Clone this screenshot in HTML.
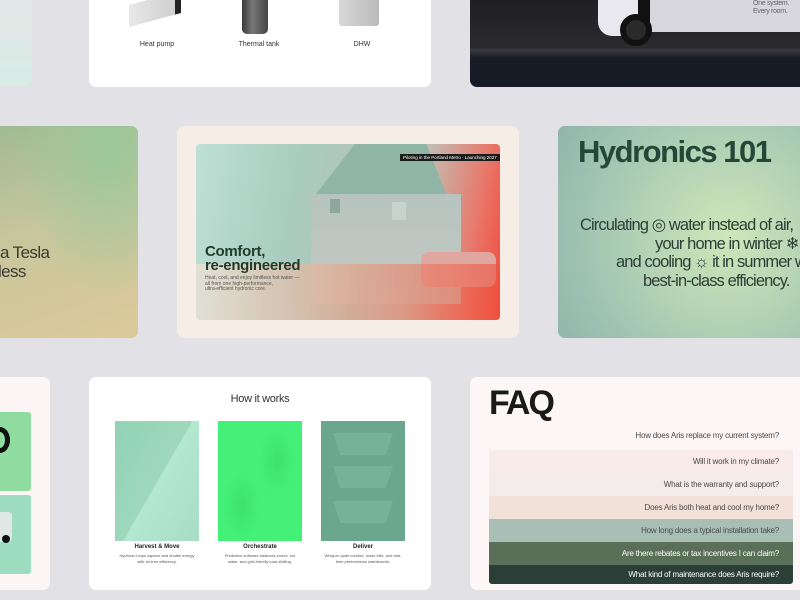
<!DOCTYPE html>
<html><head><meta charset="utf-8"><style>
*{margin:0;padding:0;box-sizing:border-box}
body{width:800px;height:600px;overflow:hidden;background:#e2e1e5;font-family:"Liberation Sans",sans-serif;position:relative}
.a{position:absolute}
.card{position:absolute;border-radius:7px;overflow:hidden}
.faq div{height:23px;text-align:right;padding-right:14px;font-size:8px;line-height:23px;color:#4a4a4a;letter-spacing:-0.2px}
.hl{position:absolute;font-size:16.5px;color:#2c3e36;letter-spacing:-0.9px;white-space:nowrap}
</style></head><body>

<!-- row 1 -->
<div class="card" style="left:-10px;top:-10px;width:42px;height:96px;background:linear-gradient(180deg,#e6e8e8,#dbe9e5 70%,#d7ece6)"></div>
<div class="card" style="left:89px;top:-10px;width:342px;height:97px;background:#fff">
  <div class="a" style="left:40px;top:8px;width:52px;height:22px;background:linear-gradient(90deg,#e8e8e8,#cfcfcf);transform:skewY(-15deg);border-right:6px solid #222"></div>
  <div class="a" style="left:153px;top:6px;width:26px;height:38px;border-radius:0 0 5px 5px;background:linear-gradient(90deg,#3a3a3a,#777 40%,#444)"></div>
  <div class="a" style="left:250px;top:6px;width:40px;height:30px;background:linear-gradient(90deg,#d8d8d8,#bbb);border-radius:0 0 3px 3px"></div>
  <div class="a" style="left:38px;top:51px;width:60px;text-align:center;font-size:7px;color:#333">Heat pump</div>
  <div class="a" style="left:140px;top:51px;width:60px;text-align:center;font-size:7px;color:#333">Thermal tank</div>
  <div class="a" style="left:243px;top:51px;width:60px;text-align:center;font-size:7px;color:#333">DHW</div>
</div>
<div class="card" style="left:470px;top:-10px;width:340px;height:97px;background:linear-gradient(180deg,#1e1e22 0%,#2a2a2e 60%,#3a3a40 61%,#1a1d26 70%,#141a26)">
  <div class="a" style="left:128px;top:0;width:40px;height:46px;background:#e8e8ee;border-radius:0 0 0 14px"></div>
  <div class="a" style="left:168px;top:0;width:12px;height:44px;background:#111"></div>
  <div class="a" style="left:180px;top:0;width:160px;height:42px;background:#d6d6dc"></div>
  <div class="a" style="left:150px;top:24px;width:32px;height:32px;border-radius:50%;background:#2a2a2a;border:6px solid #111"></div>
</div>
<div class="a" style="left:753px;top:0;font-size:7px;color:#666;line-height:8px;letter-spacing:-0.3px">One system.<br>Every room.</div>

<!-- row 2 -->
<div class="card" style="left:-10px;top:126px;width:148px;height:212px;background:radial-gradient(ellipse at 80% 10%,#9cc89a 0%,transparent 55%),linear-gradient(160deg,#9fba92 0%,#c8c69c 45%,#dcc99a 100%)">
  <div class="a" style="left:10px;top:117px;font-size:17px;color:#3a3a30;letter-spacing:-0.6px;white-space:nowrap">a Tesla</div>
  <div class="a" style="left:8px;top:136px;font-size:17px;color:#3a3a30;letter-spacing:-0.6px;white-space:nowrap;">less</div>
</div>

<div class="card" style="left:177px;top:126px;width:342px;height:212px;background:#f5ede6">
  <div class="a" style="left:19px;top:18px;width:304px;height:176px;border-radius:4px;overflow:hidden;background:linear-gradient(100deg,#bfe0d6 0%,#a9cdbf 30%,#b3c3bc 55%,#c4bdb2 70%,#e8776a 88%,#f04a3c 100%)">
    <div class="a" style="left:120px;top:0;width:130px;height:50px;background:#8fb5a6;clip-path:polygon(30% 0,85% 0,100% 100%,0 100%)"></div>
    <div class="a" style="left:115px;top:50px;width:150px;height:110px;background:linear-gradient(180deg,#b6c4bf,#c7c8c2);"></div>
    <div class="a" style="left:134px;top:55px;width:10px;height:14px;background:#8ea79d"></div>
    <div class="a" style="left:196px;top:58px;width:14px;height:18px;background:#c9d3ce"></div>
    <div class="a" style="left:225px;top:108px;width:75px;height:35px;border-radius:8px;background:#e0a6a0"></div>
    <div class="a" style="left:0;top:120px;width:304px;height:56px;background:linear-gradient(90deg,rgba(235,225,215,.8),rgba(230,160,130,.6) 50%,rgba(240,80,60,.6))"></div>
    <div class="a" style="left:204px;top:10px;background:#1b1b1b;color:#fff;font-size:4.5px;padding:1px 3px;white-space:nowrap">Piloting in the Portland Metro · Launching 2027</div>
    <div class="a" style="left:9px;top:101px;font-size:15px;font-weight:bold;color:#1f3b2c;line-height:14px;letter-spacing:-0.3px">Comfort,<br>re-engineered</div>
    <div class="a" style="left:9px;top:132px;font-size:5px;color:#555;line-height:5.5px">Heat, cool, and enjoy limitless hot water —<br>all from one high-performance,<br>ultra-efficient hydronic core.</div>
  </div>
</div>

<div class="card" style="left:558px;top:126px;width:252px;height:212px;background:radial-gradient(circle at 170px 110px,#cfe6b8 0%,#b5d4b5 40%,#9bbfb0 80%,#90b5aa 100%)">
  <div class="a" style="left:20px;top:8px;font-size:31px;font-weight:bold;color:#254738;letter-spacing:-1.5px">Hydronics 101</div>
  <div class="hl" style="left:22px;top:89px">Circulating ◎ water instead of air,</div>
  <div class="hl" style="left:97px;top:108px">your home in winter ❄ warming</div>
  <div class="hl" style="left:58px;top:127px">and cooling ☼ it in summer with</div>
  <div class="hl" style="left:85px;top:146px">best-in-class efficiency.</div>
</div>

<!-- row 3 -->
<div class="card" style="left:-10px;top:377px;width:60px;height:213px;background:#fbf5f5">
  <div class="a" style="left:0;top:35px;width:41px;height:79px;border-radius:3px;background:#8fdba0"></div>
  <div class="a" style="left:0;top:118px;width:41px;height:79px;border-radius:3px;background:#9edcc0"></div>
  <div class="a" style="left:0;top:50px;width:20px;height:26px;border-radius:50%;border:5px solid #111"></div>
  <div class="a" style="left:0;top:135px;width:22px;height:30px;background:#dfe8e4;border-radius:4px"></div>
  <div class="a" style="left:12px;top:158px;width:8px;height:8px;border-radius:50%;background:#111"></div>
</div>

<div class="card" style="left:89px;top:377px;width:342px;height:213px;background:#fff">
  <div class="a" style="left:0;top:16px;width:342px;text-align:center;font-size:11px;color:#333;letter-spacing:-0.3px">How it works</div>
  <div class="a" style="left:26px;top:44px;width:84px;height:120px;background:linear-gradient(120deg,#92d2b4 0%,#9ed8bc 50%,#b3e8d0 51%,#a6ddc4 100%)"></div>
  <div class="a" style="left:129px;top:44px;width:84px;height:120px;background:#45f078">
    <div class="a" style="left:40px;top:5px;width:38px;height:70px;border-radius:50%;background:radial-gradient(ellipse,rgba(40,200,90,.35),transparent 70%)"></div>
    <div class="a" style="left:5px;top:50px;width:38px;height:70px;border-radius:50%;background:radial-gradient(ellipse,rgba(40,200,90,.35),transparent 70%)"></div>
  </div>
  <div class="a" style="left:232px;top:44px;width:84px;height:120px;background:#6ba78c">
    <div class="a" style="left:12px;top:12px;width:60px;height:22px;background:#75b298;clip-path:polygon(0 0,100% 0,88% 100%,12% 100%)"></div>
    <div class="a" style="left:12px;top:45px;width:60px;height:22px;background:#75b298;clip-path:polygon(0 0,100% 0,88% 100%,12% 100%)"></div>
    <div class="a" style="left:12px;top:80px;width:60px;height:22px;background:#75b298;clip-path:polygon(0 0,100% 0,88% 100%,12% 100%)"></div>
  </div>
  <div class="a" style="left:18px;top:167px;width:100px;text-align:center;font-size:6px;font-weight:bold;color:#222">Harvest &amp; Move</div>
  <div class="a" style="left:121px;top:167px;width:100px;text-align:center;font-size:6px;font-weight:bold;color:#222">Orchestrate</div>
  <div class="a" style="left:224px;top:167px;width:100px;text-align:center;font-size:6px;font-weight:bold;color:#222">Deliver</div>
  <div class="a" style="left:18px;top:176px;width:100px;text-align:center;font-size:4px;line-height:6px;color:#555">Hydronic loops capture and shuttle energy<br>with air-free efficiency.</div>
  <div class="a" style="left:121px;top:176px;width:100px;text-align:center;font-size:4px;line-height:6px;color:#555">Predictive software balances zones, hot<br>water, and grid-friendly load shifting.</div>
  <div class="a" style="left:224px;top:176px;width:100px;text-align:center;font-size:4px;line-height:6px;color:#555">Whisper-quiet comfort, lower bills, and real-<br>time performance dashboards.</div>
</div>

<div class="card" style="left:470px;top:377px;width:340px;height:213px;background:#fcf6f6">
  <div class="a" style="left:19px;top:7px;font-size:34px;font-weight:bold;color:#1a1a1a;letter-spacing:-2px">FAQ</div>
  <div class="a" style="left:19px;top:54px;width:304px;text-align:right;padding-right:14px;font-size:8px;color:#4a4a4a;letter-spacing:-0.2px">How does Aris replace my current system?</div>
  <div class="a faq" style="left:19px;top:73px;width:304px;border-radius:0 0 3px 3px;overflow:hidden">
    <div style="background:#f8ebea">Will it work in my climate?</div>
    <div style="background:#f4ecea">What is the warranty and support?</div>
    <div style="background:#f2e1d9">Does Aris both heat and cool my home?</div>
    <div style="background:#a8bfb6">How long does a typical installation take?</div>
    <div style="background:#596f58;color:#fff">Are there rebates or tax incentives I can claim?</div>
    <div style="background:#2b3f38;color:#fff;height:19px;line-height:19px">What kind of maintenance does Aris require?</div>
  </div>
</div>
</body></html>
